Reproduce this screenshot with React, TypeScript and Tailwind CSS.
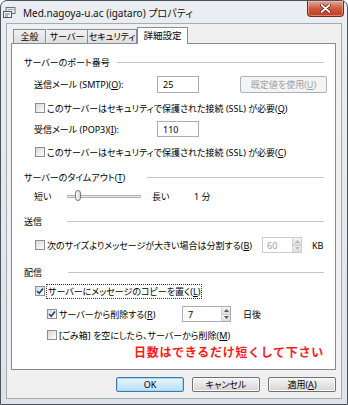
import React from "react";

const FONT = '"Noto Sans", "Noto Sans CJK JP", sans-serif';

function U({ c }: { c: string }) {
  return <span className="underline underline-offset-[1px]">{c}</span>;
}

function Check({ checked = false }: { checked?: boolean }) {
  return (
    <div className="w-[10px] h-[10px] shrink-0 border border-[#8e8f8f] bg-gradient-to-br from-[#d8d8d8] to-[#ffffff] flex items-center justify-center">
      {checked && (
        <svg width="8" height="8" viewBox="0 0 8 8">
          <path d="M1 4 L3.2 6.3 L7 1.4" fill="none" stroke="#1f3f96" strokeWidth="1.6" />
        </svg>
      )}
    </div>
  );
}

function Heading({ text, w }: { text: React.ReactNode; w: string }) {
  return (
    <div className="flex items-center h-[14px] pr-[11px]">
      <div className={`${w} shrink-0 whitespace-nowrap`}>{text}</div>
      <div className="flex-1 h-px bg-[#c4c8cc]" />
    </div>
  );
}

function SpinArrows({ disabled = false }: { disabled?: boolean }) {
  const col = disabled ? "#b8b8b8" : "#4d5a6a";
  return (
    <div className="w-[9px] h-full flex flex-col border-l border-[#d0d3d8]">
      <div className="flex-1 flex items-center justify-center bg-gradient-to-b from-[#f6f6f6] to-[#dcdcdc] border-b border-[#c8c8c8]">
        <svg width="5" height="3" viewBox="0 0 5 3">
          <path d="M0 3 L2.5 0 L5 3 Z" fill={col} />
        </svg>
      </div>
      <div className="flex-1 flex items-center justify-center bg-gradient-to-b from-[#f6f6f6] to-[#dcdcdc]">
        <svg width="5" height="3" viewBox="0 0 5 3">
          <path d="M0 0 L2.5 3 L5 0 Z" fill={col} />
        </svg>
      </div>
    </div>
  );
}

function Button({ children, def = false }: { children: React.ReactNode; def?: boolean }) {
  return (
    <div
      className={`w-[68px] h-[15px] rounded-[2px] border flex items-center justify-center ${
        def
          ? "border-[#3d7bad] bg-gradient-to-b from-[#e9f5fd] to-[#b9dff6] shadow-[inset_0_0_0_1px_#9fdcf8]"
          : "border-[#707070] bg-gradient-to-b from-[#f4f4f4] via-[#e6e6e6] to-[#d3d3d3] shadow-[inset_0_0_0_1px_#fcfcfc]"
      }`}
    >
      {children}
    </div>
  );
}

export default function App() {
  return (
    <div
      className="w-[348px] h-[405px] flex flex-col rounded-t-[7px] border border-[#4b535c] bg-gradient-to-b from-[#eaeef2] to-[#dde3e9] text-[9px] leading-none text-black [font-feature-settings:'palt']"
      style={{ fontFamily: FONT }}
    >
      {/* title bar */}
      <div className="h-[22px] flex items-start shrink-0">
        <div className="mt-[6px] ml-[2px] w-[13px] h-[12px]">
          <svg width="13" height="12" viewBox="0 0 13 12">
            <rect x="3" y="0.5" width="9" height="6" fill="#e8ecf0" stroke="#6a737c" />
            <rect x="4.5" y="2" width="6" height="1" fill="#9aa4ad" />
            <rect x="0.5" y="4.5" width="8" height="6" fill="#f4f6f8" stroke="#505860" />
            <rect x="2" y="6.5" width="5" height="1" fill="#707a84" />
            <rect x="2" y="8.5" width="3" height="1" fill="#707a84" />
          </svg>
        </div>
        <div className="mt-[7px] ml-[7px] text-[10px] text-[#111] whitespace-nowrap">
          Med.nagoya-u.ac (igataro) プロパティ
        </div>
        <div className="ml-auto mr-[3px] w-[37px] h-[16px] rounded-b-[4px] border border-t-0 border-[#6e2a1c] bg-gradient-to-b from-[#e8a595] via-[#cf5a40] to-[#c23a1e] flex items-center justify-center shadow-[inset_0_0_0_1px_rgba(255,200,190,0.5)]">
          <svg width="11" height="9" viewBox="0 0 11 9">
            <path d="M1.5 1 L9.5 8 M9.5 1 L1.5 8" stroke="#4a1a10" strokeWidth="3.2" strokeLinecap="round" />
            <path d="M1.5 1 L9.5 8 M9.5 1 L1.5 8" stroke="#ffffff" strokeWidth="1.8" strokeLinecap="round" />
          </svg>
        </div>
      </div>

      {/* client */}
      <div className="mx-[5px] h-[376px] shrink-0 border border-[#a3abb4] bg-[#f0f0f0] flex flex-col pt-[3px] pl-[4px] pr-[5px]">
        {/* tabs */}
        <div className="relative z-10 flex items-end h-[17px] pl-[2px] whitespace-nowrap">
          <div className="mb-px w-[33px] h-[14px] border border-b-0 border-[#898c95] bg-gradient-to-b from-[#f2f2f2] to-[#dedede] flex items-center justify-center">
            全般
          </div>
          <div className="mb-px ml-[1px] w-[41px] h-[14px] border border-b-0 border-l-0 border-[#898c95] bg-gradient-to-b from-[#f2f2f2] to-[#dedede] flex items-center justify-center">
            サーバー
          </div>
          <div className="mb-px w-[49px] h-[14px] border border-b-0 border-l-0 border-[#898c95] bg-gradient-to-b from-[#f2f2f2] to-[#dedede] flex items-center justify-center">
            セキュリティ
          </div>
          <div className="w-[51px] h-[17px] border border-b-0 border-[#898c95] bg-white flex items-center justify-center pb-[1px] text-[9.5px]">
            詳細設定
          </div>
        </div>

        {/* panel */}
        <div className="-mt-px h-[327px] border border-[#898c95] bg-white flex flex-col pl-[12px]">
          <div className="mt-[11px]">
            <Heading text="サーバーのポート番号" w="w-[93px]" />
          </div>

          <div className="mt-[7px] h-[17px] flex items-center pl-[10px]">
            <div className="w-[123px] whitespace-nowrap">
              送信メール (SMTP)(<U c="O" />):
            </div>
            <div className="w-[42px] h-[17px] border border-[#abadb3] flex items-center pl-[5px]">25</div>
            <div className="ml-[41px] w-[87px] h-[17px] rounded-[2px] border border-[#adb2b5] bg-[#f4f4f4] flex items-center justify-center text-[#a0a0a0]">
              既定値を使用(<U c="U" />)
            </div>
          </div>

          <div className="mt-[8px] h-[14px] flex items-center pl-[11px] gap-[2px] whitespace-nowrap">
            <Check />
            <span>
              このサーバーはセキュリティで保護された接続 (SSL) が必要(<U c="Q" />)
            </span>
          </div>

          <div className="mt-[6px] h-[16px] flex items-center pl-[10px]">
            <div className="w-[123px] whitespace-nowrap">
              受信メール (POP3)(<U c="I" />):
            </div>
            <div className="w-[42px] h-[16px] border border-[#abadb3] flex items-center pl-[5px]">110</div>
          </div>

          <div className="mt-[8px] h-[14px] flex items-center pl-[11px] gap-[2px] whitespace-nowrap">
            <Check />
            <span>
              このサーバーはセキュリティで保護された接続 (SSL) が必要(<U c="C" />)
            </span>
          </div>

          <div className="mt-[11px]">
            <Heading
              text={
                <>
                  サーバーのタイムアウト(<U c="T" />)
                </>
              }
              w="w-[123px]"
            />
          </div>

          <div className="mt-[4px] h-[16px] flex items-center pl-[10px]">
            <div className="w-[33px]">短い</div>
            <div className="relative w-[74px] h-[16px] flex items-center">
              <div className="w-full h-[3px] border border-[#b0b0b0] bg-[#e7eaea] rounded-[1px]" />
              <div className="absolute left-[8px] top-[2px] w-[6px] h-[11px] rounded-[3px] border border-[#7b7b7b] bg-gradient-to-r from-[#fdfdfd] to-[#d6d6d6]" />
            </div>
            <div className="ml-[11px] w-[42px]">長い</div>
            <div>1 分</div>
          </div>

          <div className="mt-[10px]">
            <Heading text="送信" w="w-[43px]" />
          </div>

          <div className="mt-[9px] h-[16px] flex items-center pl-[11px] whitespace-nowrap">
            <div className="w-[227px] flex items-center gap-[2px]">
              <Check />
              <span>
                次のサイズよりメッセージが大きい場合は分割する(<U c="B" />)
              </span>
            </div>
            <div className="w-[40px] h-[16px] border border-[#c9cbce] flex items-center text-[#a0a0a0]">
              <div className="flex-1 pl-[4px]">60</div>
              <SpinArrows disabled />
            </div>
            <div className="ml-[10px]">KB</div>
          </div>

          <div className="mt-[12px]">
            <Heading text="配信" w="w-[44px]" />
          </div>

          <div className="mt-[5px] h-[14px] flex items-center pl-[11px] gap-[2px] whitespace-nowrap">
            <Check checked />
            <span className="outline-1 outline-dotted outline-[#333] px-[1px] py-[2px]">
              サーバーにメッセージのコピーを置く(<U c="L" />)
            </span>
          </div>

          <div className="mt-[8px] h-[16px] flex items-center pl-[23px] whitespace-nowrap">
            <div className="w-[135px] flex items-center gap-[2px]">
              <Check checked />
              <span>
                サーバーから削除する(<U c="R" />)
              </span>
            </div>
            <div className="w-[49px] h-[16px] border border-[#abadb3] flex items-center">
              <div className="flex-1 pl-[5px]">7</div>
              <SpinArrows />
            </div>
            <div className="ml-[12px]">日後</div>
          </div>

          <div className="mt-[6px] h-[14px] flex items-center pl-[23px] gap-[2px] whitespace-nowrap">
            <Check />
            <span>
              [ごみ箱] を空にしたら、サーバーから削除(<U c="M" />)
            </span>
          </div>

          <div className="mt-[3px] h-[16px] flex items-center pl-[110px] whitespace-nowrap">
            <span className="text-[12px] font-bold text-[#ff1a1a] tracking-[0.7px] [font-feature-settings:normal]">
              日数はできるだけ短くして下さい
            </span>
          </div>
        </div>

        {/* buttons */}
        <div className="mt-[7px] flex justify-end gap-[8px]">
          <Button def>OK</Button>
          <Button>キャンセル</Button>
          <Button>
            <span>
              適用(<U c="A" />)
            </span>
          </Button>
        </div>
      </div>
    </div>
  );
}
